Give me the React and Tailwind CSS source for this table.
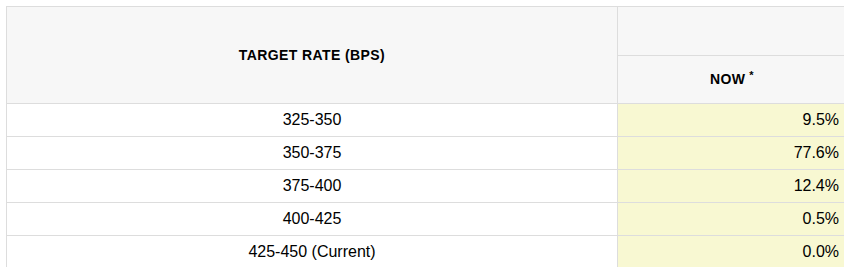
export default function App() {
  const rows = [
    ["325-350", "9.5%"],
    ["350-375", "77.6%"],
    ["375-400", "12.4%"],
    ["400-425", "0.5%"],
    ["425-450 (Current)", "0.0%"],
  ];
  return (
    <div
      className="w-[844px] h-[267px] overflow-hidden bg-white pt-[6px] pl-[6px] text-black"
      style={{ fontFamily: '"Liberation Sans", Arial, sans-serif' }}
    >
      <div className="w-[880px] border-t border-l border-[#dddddd]">
        <div className="flex">
          <div className="w-[611px] h-[97px] shrink-0 bg-[#f7f7f7] border-r border-b border-[#dddddd] flex items-center justify-center text-[14px] font-bold tracking-[0.4px]">
            TARGET RATE (BPS)
          </div>
          <div className="w-[228px] shrink-0 flex flex-col">
            <div className="h-[49px] bg-[#f7f7f7] border-b border-[#dddddd]"></div>
            <div className="h-[48px] bg-[#f7f7f7] border-b border-[#dddddd] flex items-center justify-center text-[14px] font-bold tracking-[0.4px]">
              <span>
                NOW
                <span className="relative -top-[5px] ml-[4px] text-[11px]">*</span>
              </span>
            </div>
          </div>
          <div className="flex-1 flex flex-col">
            <div className="h-[49px] bg-[#f7f7f7] border-b border-[#dddddd]"></div>
            <div className="h-[48px] bg-[#f7f7f7] border-b border-[#dddddd]"></div>
          </div>
        </div>
        {rows.map(([a, b]) => (
          <div key={a} className="flex h-[33px] text-[16px]">
            <div className="w-[611px] shrink-0 border-r border-b border-[#dddddd] flex items-center justify-center">
              {a}
            </div>
            <div className="w-[228px] shrink-0 bg-[#f8f8d2] border-b border-[#dddddd] flex items-center justify-end pr-[7px]">
              {b}
            </div>
            <div className="flex-1 bg-[#f8f8d2] border-b border-[#dddddd]"></div>
          </div>
        ))}
      </div>
    </div>
  );
}
